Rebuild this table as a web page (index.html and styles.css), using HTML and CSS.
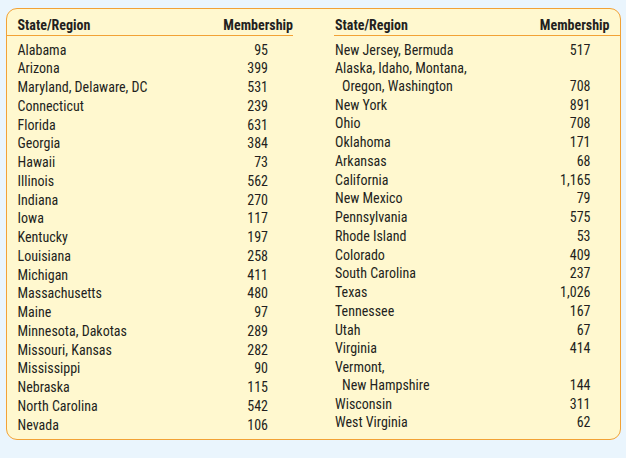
FILE: index.html
```html
<!DOCTYPE html>
<html lang="en">
<head>
<meta charset="utf-8">
<title>Membership by State/Region</title>
<link rel="stylesheet" href="styles.css">
</head>
<body>
<div class="box">
  <div class="tbl tbl-left">
    <div class="head"><span>State/Region</span><span>Membership</span></div>
    <div class="rows">
      <div class="row"><span>Alabama</span><span class="num">95</span></div>
      <div class="row"><span>Arizona</span><span class="num">399</span></div>
      <div class="row"><span>Maryland, Delaware, DC</span><span class="num">531</span></div>
      <div class="row"><span>Connecticut</span><span class="num">239</span></div>
      <div class="row"><span>Florida</span><span class="num">631</span></div>
      <div class="row"><span>Georgia</span><span class="num">384</span></div>
      <div class="row"><span>Hawaii</span><span class="num">73</span></div>
      <div class="row"><span>Illinois</span><span class="num">562</span></div>
      <div class="row"><span>Indiana</span><span class="num">270</span></div>
      <div class="row"><span>Iowa</span><span class="num">117</span></div>
      <div class="row"><span>Kentucky</span><span class="num">197</span></div>
      <div class="row"><span>Louisiana</span><span class="num">258</span></div>
      <div class="row"><span>Michigan</span><span class="num">411</span></div>
      <div class="row"><span>Massachusetts</span><span class="num">480</span></div>
      <div class="row"><span>Maine</span><span class="num">97</span></div>
      <div class="row"><span>Minnesota, Dakotas</span><span class="num">289</span></div>
      <div class="row"><span>Missouri, Kansas</span><span class="num">282</span></div>
      <div class="row"><span>Mississippi</span><span class="num">90</span></div>
      <div class="row"><span>Nebraska</span><span class="num">115</span></div>
      <div class="row"><span>North Carolina</span><span class="num">542</span></div>
      <div class="row"><span>Nevada</span><span class="num">106</span></div>
    </div>
  </div>
  <div class="tbl tbl-right">
    <div class="head"><span>State/Region</span><span>Membership</span></div>
    <div class="rows">
      <div class="row"><span>New Jersey, Bermuda</span><span class="num">517</span></div>
      <div class="row row-2"><span>Alaska, Idaho, Montana,<br><span class="indent">Oregon, Washington</span></span><span class="num">708</span></div>
      <div class="row"><span>New York</span><span class="num">891</span></div>
      <div class="row"><span>Ohio</span><span class="num">708</span></div>
      <div class="row"><span>Oklahoma</span><span class="num">171</span></div>
      <div class="row"><span>Arkansas</span><span class="num">68</span></div>
      <div class="row"><span>California</span><span class="num">1,165</span></div>
      <div class="row"><span>New Mexico</span><span class="num">79</span></div>
      <div class="row"><span>Pennsylvania</span><span class="num">575</span></div>
      <div class="row"><span>Rhode Island</span><span class="num">53</span></div>
      <div class="row"><span>Colorado</span><span class="num">409</span></div>
      <div class="row"><span>South Carolina</span><span class="num">237</span></div>
      <div class="row"><span>Texas</span><span class="num">1,026</span></div>
      <div class="row"><span>Tennessee</span><span class="num">167</span></div>
      <div class="row"><span>Utah</span><span class="num">67</span></div>
      <div class="row"><span>Virginia</span><span class="num">414</span></div>
      <div class="row row-2"><span>Vermont,<br><span class="indent">New Hampshire</span></span><span class="num">144</span></div>
      <div class="row"><span>Wisconsin</span><span class="num">311</span></div>
      <div class="row"><span>West Virginia</span><span class="num">62</span></div>
    </div>
  </div>
</div>
</body>
</html>
```

FILE: styles.css
```css
html, body {
  margin: 0;
  padding: 0;
}
body {
  background: #eaf5fd;
  width: 626px;
  height: 458px;
  font-family: "Roboto Condensed", Roboto, "Liberation Sans", sans-serif;
  color: #231f20;
  font-size: 14px;
}
.box {
  margin: 8px 0 0 6px;
  width: 615px;
  height: 432px;
  box-sizing: border-box;
  border: 1.5px solid #f2a236;
  border-radius: 11px;
  background: #fff8cf;
  display: flex;
  gap: 41px;
}
.tbl {
  display: flex;
  flex-direction: column;
}
.tbl-left {
  width: 286px;
}
.tbl-right {
  flex: 1;
}
.head {
  display: flex;
  justify-content: space-between;
  font-weight: 700;
  line-height: 16px;
  padding: 8px 0 1.5px;
  border-bottom: 1.5px solid #f2a236;
}
.tbl-left .head {
  padding-left: 10.5px;
}
.tbl-right .head {
  padding-left: 1px;
  padding-right: 10.5px;
}
.rows {
  padding-top: 5px;
}
.row {
  display: flex;
  justify-content: space-between;
  height: 18.75px;
  line-height: 18.75px;
}
.tbl-left .row {
  padding-left: 10.5px;
  padding-right: 25px;
}
.tbl-right .row {
  padding-left: 1px;
  padding-right: 29.5px;
}
.tbl-right .row-2 {
  height: 36.4px;
  line-height: 18.2px;
  align-items: flex-end;
}
.row-2 .num {
  line-height: 18.2px;
}
.indent {
  padding-left: 7px;
}
```
